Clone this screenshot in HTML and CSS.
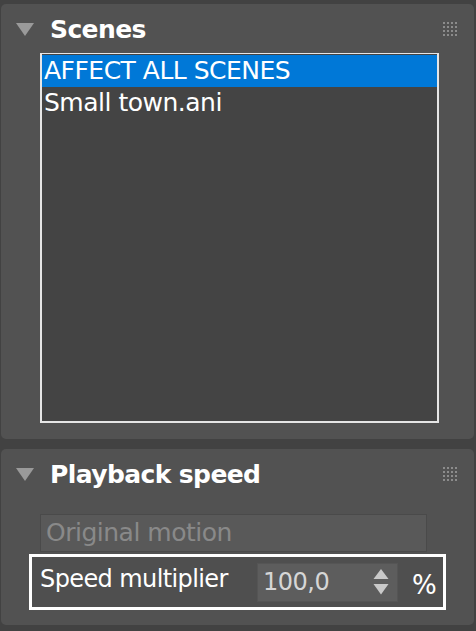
FILE: index.html
```html
<!DOCTYPE html>
<html>
<head>
    <meta charset="UTF-8">
    <title>Scenes</title>
    <link rel="stylesheet" href="styles.css">
</head>
<body>
    <div class="panel" id="scenes-panel">
        <div class="panel-head">
            <span class="caret"></span>
            <h3>Scenes</h3>
            <svg class="grip" width="14" height="14" viewBox="0 0 14 14">
                <g fill="#8c8c8c">
                    <rect x="0" y="0" width="2" height="2"/><rect x="4" y="0" width="2" height="2"/><rect x="8" y="0" width="2" height="2"/><rect x="12" y="0" width="2" height="2"/>
                    <rect x="0" y="4" width="2" height="2"/><rect x="4" y="4" width="2" height="2"/><rect x="8" y="4" width="2" height="2"/><rect x="12" y="4" width="2" height="2"/>
                    <rect x="0" y="8" width="2" height="2"/><rect x="4" y="8" width="2" height="2"/><rect x="8" y="8" width="2" height="2"/><rect x="12" y="8" width="2" height="2"/>
                    <rect x="0" y="12" width="2" height="2"/><rect x="4" y="12" width="2" height="2"/><rect x="8" y="12" width="2" height="2"/><rect x="12" y="12" width="2" height="2"/>
                </g>
            </svg>
        </div>
        <div class="scene-list">
            <div class="scene-item selected">AFFECT ALL SCENES</div>
            <div class="scene-item">Small town.ani</div>
        </div>
    </div>

    <div class="panel" id="speed-panel">
        <div class="panel-head">
            <span class="caret"></span>
            <h3>Playback speed</h3>
            <svg class="grip" width="14" height="14" viewBox="0 0 14 14">
                <g fill="#8c8c8c">
                    <rect x="0" y="0" width="2" height="2"/><rect x="4" y="0" width="2" height="2"/><rect x="8" y="0" width="2" height="2"/><rect x="12" y="0" width="2" height="2"/>
                    <rect x="0" y="4" width="2" height="2"/><rect x="4" y="4" width="2" height="2"/><rect x="8" y="4" width="2" height="2"/><rect x="12" y="4" width="2" height="2"/>
                    <rect x="0" y="8" width="2" height="2"/><rect x="4" y="8" width="2" height="2"/><rect x="8" y="8" width="2" height="2"/><rect x="12" y="8" width="2" height="2"/>
                    <rect x="0" y="12" width="2" height="2"/><rect x="4" y="12" width="2" height="2"/><rect x="8" y="12" width="2" height="2"/><rect x="12" y="12" width="2" height="2"/>
                </g>
            </svg>
        </div>
        <div class="mode-box">Original motion</div>
        <div class="speed-row">
            <span class="speed-label">Speed multiplier</span>
            <div class="spin-box">
                <span class="spin-value">100,0</span>
                <svg class="spin-arrows" width="16" height="27" viewBox="0 0 16 27">
                    <polygon points="8,0 15.5,10 0.5,10" fill="#c9c9c9"/>
                    <polygon points="0.5,15 15.5,15 8,25.5" fill="#c9c9c9"/>
                </svg>
            </div>
            <span class="unit">%</span>
        </div>
    </div>
</body>
</html>
```

FILE: styles.css
```css
body, html {
    margin: 0;
    padding: 0;
    width: 100%;
    height: 100%;
    overflow: hidden;
    background-color: #424242;
    color: white;
    font-family: "DejaVu Sans", Verdana, sans-serif;
}
body {
    padding-top: 4px;
    box-sizing: border-box;
}
.panel {
    background-color: #525252;
    border-radius: 5px;
    margin: 0 2px 0 1px;
}
#scenes-panel {
    padding-bottom: 16px;
}
#speed-panel {
    margin-top: 10px;
    padding-bottom: 15px;
}
.panel-head {
    display: flex;
    align-items: center;
    height: 48px;
    padding: 0 17px 0 15px;
}
.panel-head h3 {
    margin: 3px 0 0 16px;
    flex-grow: 1;
    font-size: 25px;
    letter-spacing: -0.6px;
    font-weight: bold;
}
.caret {
    width: 0;
    height: 0;
    border-left: 9px solid transparent;
    border-right: 9px solid transparent;
    border-top: 13px solid #9a9a9a;
    margin-top: 2px;
}
.grip {
    display: block;
    margin-top: 2px;
}
.scene-list {
    margin: 1px 0 0 39px;
    width: 395px;
    height: 367px;
    border: 2px solid #e6e6e6;
    border-top-width: 1px;
    background-color: #444444;
}
.scene-item {
    height: 32px;
    line-height: 32px;
    padding-left: 2px;
    font-size: 25px;
    letter-spacing: -0.5px;
    white-space: nowrap;
}
.scene-item.selected {
    background-color: #0078d7;
    margin-top: 1px;
}
.mode-box {
    margin: 17px 0 0 39px;
    width: 380px;
    height: 36px;
    border: 1px solid #4a4a4a;
    background-color: #595959;
    color: #898989;
    font-size: 25px;
    letter-spacing: -0.5px;
    line-height: 36px;
    padding-left: 5px;
}
.speed-row {
    display: flex;
    align-items: center;
    margin: 2px 0 0 28px;
    width: 411px;
    height: 50px;
    border: 3px solid #ffffff;
    background-color: #4f4f4f;
}
.speed-label {
    font-size: 24px;
    letter-spacing: -0.6px;
    margin-left: 8px;
    width: 217px;
    margin-top: -6px;
    white-space: nowrap;
}
.spin-box {
    display: flex;
    align-items: center;
    justify-content: space-between;
    width: 141px;
    height: 39px;
    box-sizing: border-box;
    border: 1px solid #555;
    background-color: #5d5d5d;
    padding: 0 8px 0 5px;
}
.spin-value {
    font-size: 24px;
    letter-spacing: -0.5px;
    color: #d6d6d6;
}
.spin-arrows {
    display: block;
}
.unit {
    font-size: 26px;
    margin: 6px 0 0 14px;
}
```
